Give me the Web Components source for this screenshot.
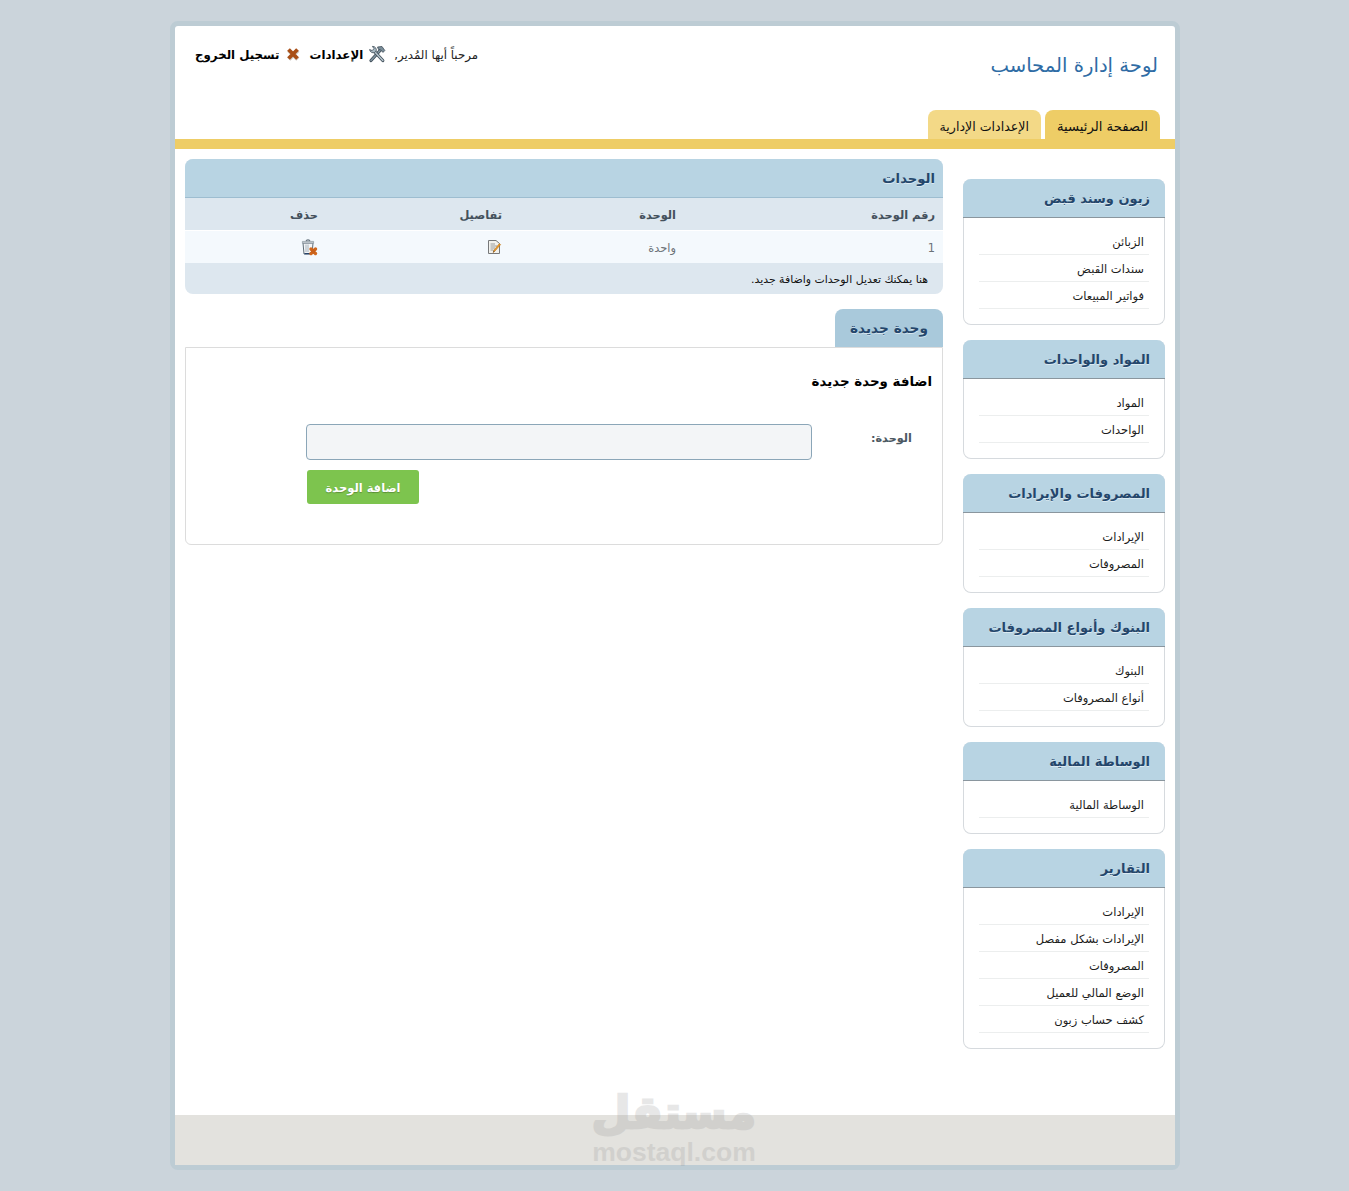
<!DOCTYPE html>
<html lang="ar" dir="rtl">
<head>
<meta charset="utf-8">
<title>لوحة إدارة المحاسب</title>
<style>
  html, body { margin: 0; padding: 0; background: #cbd4db; }
  body { font-family: "DejaVu Sans", "Noto Sans", sans-serif; font-size: 11px; color: #111; }
</style>
</head>
<body>
<app-shell>
  <top-header slot="header">
    <span slot="title">لوحة إدارة المحاسب</span>
    <user-links slot="links"></user-links>
    <nav-tab slot="tabs" active>الصفحة الرئيسية</nav-tab>
    <nav-tab slot="tabs">الإعدادات الإدارية</nav-tab>
  </top-header>

  <side-box slot="side" heading="زبون وسند قبض">
    <side-link>الزبائن</side-link>
    <side-link>سندات القبض</side-link>
    <side-link>فواتير المبيعات</side-link>
  </side-box>
  <side-box slot="side" heading="المواد والواحدات">
    <side-link>المواد</side-link>
    <side-link>الواحدات</side-link>
  </side-box>
  <side-box slot="side" heading="المصروفات والإيرادات">
    <side-link>الإيرادات</side-link>
    <side-link>المصروفات</side-link>
  </side-box>
  <side-box slot="side" heading="البنوك وأنواع المصروفات">
    <side-link>البنوك</side-link>
    <side-link>أنواع المصروفات</side-link>
  </side-box>
  <side-box slot="side" heading="الوساطة المالية">
    <side-link>الوساطة المالية</side-link>
  </side-box>
  <side-box slot="side" heading="التقارير">
    <side-link>الإيرادات</side-link>
    <side-link>الإيرادات بشكل مفصل</side-link>
    <side-link>المصروفات</side-link>
    <side-link>الوضع المالي للعميل</side-link>
    <side-link>كشف حساب زبون</side-link>
  </side-box>

  <units-table slot="main"></units-table>
  <new-unit slot="main"></new-unit>
</app-shell>

<script>
'use strict';

// little hand drawn icons
const ICONS = {
  tools: `<svg width="18" height="18" viewBox="0 0 18 18">
    <path d="M3 15.5 L12.5 5" stroke="#3f4d58" stroke-width="3.2" stroke-linecap="round"/>
    <path d="M3 15.5 L12.5 5" stroke="#7f929e" stroke-width="1.6" stroke-linecap="round"/>
    <path d="M9.5 2 L14 1.5 L16.8 5.5 L15 7.4 L12.5 4.8 L10.5 4.5 Z" fill="#7b8e9a" stroke="#3f4d58" stroke-width=".8"/>
    <path d="M14.8 15.5 L6.5 6.5" stroke="#3f4d58" stroke-width="3.2" stroke-linecap="round"/>
    <path d="M14.8 15.5 L6.5 6.5" stroke="#b4c2cb" stroke-width="1.6" stroke-linecap="round"/>
    <path d="M1.6 4.5 A3.6 3.6 0 0 0 6.8 7.4 L8.2 6 A3.6 3.6 0 0 0 4.4 1.4 L6 3.6 L4.2 5.6 Z" fill="#a8b8c2" stroke="#3f4d58" stroke-width=".8"/>
  </svg>`,
  cross: `<svg width="14" height="14" viewBox="0 0 14 14">
    <path d="M2.5 2.5 L11.5 11.5 M11.5 2.5 L2.5 11.5" stroke="#cfcbc6" stroke-width="4.4" transform="translate(.3 .8)"/>
    <path d="M2.5 2.5 L11.5 11.5 M11.5 2.5 L2.5 11.5" stroke="#a94f17" stroke-width="3.8"/>
  </svg>`,
  page: `<svg width="16" height="16" viewBox="0 0 16 16">
    <path d="M2.5 1.5 H10 L13.5 4.5 V14.5 H2.5 Z" fill="#f2f2ee" stroke="#77797a"/>
    <path d="M4.5 5 H9 M4.5 7 H11 M4.5 9 H9 M4.5 11 H7.5" stroke="#9a9c9c"/>
    <path d="M14.6 5.6 L8.8 12.2 L7.2 13.6 L7.8 11.4 L13.2 4.8 Z" fill="#f0a02a" stroke="#b96d12" stroke-width=".6"/>
    <path d="M8.6 12.3 L7.2 13.6 L7.7 11.6 Z" fill="#444"/>
  </svg>`,
  trash: `<svg width="18" height="18" viewBox="0 0 18 18">
    <path d="M3 5 L4 16 H12 L13 5 Z" fill="#f4f6f7" stroke="#5f6d78"/>
    <path d="M4.5 15.6 H11.5" stroke="#26436b" stroke-width="1.4"/>
    <path d="M6 6.5 V14 M8 6.5 V14" stroke="#a5b1ba"/>
    <path d="M6 3 Q8 .8 10 3" fill="none" stroke="#6c7a84" stroke-width="1.2"/>
    <path d="M2.4 3.4 H13.6 V5.2 H2.4 Z" fill="#c7cfd4" stroke="#7c8992" stroke-width=".6"/>
    <path d="M11 11 L15.5 15.5 M15.5 11 L11 15.5" stroke="#d0681e" stroke-width="3.4" stroke-linecap="round"/>
    <circle cx="13.25" cy="13.25" r="2.2" fill="#c9601a"/>
  </svg>`
};

class AppIcon extends HTMLElement {
  constructor() {
    super();
    this.attachShadow({mode: 'open'}).innerHTML = `
      <style>:host { display: inline-flex; line-height: 0; }</style>
      ${ICONS[this.getAttribute('name')] || ''}`;
  }
}
customElements.define('app-icon', AppIcon);

class AppShell extends HTMLElement {
  constructor() {
    super();
    this.attachShadow({mode: 'open'}).innerHTML = `
      <style>
        :host { display: block; width: 1000px; margin: 21px 169px 21px auto;
          border: 5px solid #bdccd4; border-radius: 8px; background: #fff; position: relative; }
        .body { display: flex; gap: 20px; padding: 10px 10px 66px; align-items: flex-start; }
        .side { width: 202px; flex: none; padding-top: 20px; display: flex; flex-direction: column; gap: 15px; }
        .main { flex: 1; min-width: 0; }
        footer { height: 50px; background: #e3e2de; }
        .mark { position: absolute; left: 417px; top: 1061px; width: 164px; height: 78px; color: #8c8c8c; opacity: .2;
          text-align: center; font-family: "Liberation Sans", sans-serif; font-weight: bold; pointer-events: none; direction: ltr; white-space: nowrap; }
        .mark b { display: block; font: bold 45px/52px "DejaVu Sans", sans-serif; height: 50px; direction: rtl; -webkit-text-stroke: 2.5px #8c8c8c; }
        .mark i { display: block; font-style: normal; font-size: 26.5px; line-height: 28px; margin-top: 1px; }
      </style>
      <slot name="header"></slot>
      <div class="body">
        <div class="side"><slot name="side"></slot></div>
        <div class="main"><slot name="main"></slot></div>
      </div>
      <footer></footer>
      <div class="mark"><b>مستقل</b><i>mostaql.com</i></div>`;
  }
}
customElements.define('app-shell', AppShell);

class TopHeader extends HTMLElement {
  constructor() {
    super();
    this.attachShadow({mode: 'open'}).innerHTML = `
      <style>
        :host { display: block; }
        .top { height: 84px; display: flex; justify-content: space-between; padding: 0 17px 0 20px; }
        h1 { margin: 25px 0 0; font-size: 19.6px; line-height: 30px; font-weight: normal; color: #2f6ca5; }
        .links { padding-top: 18px; }
        .tabs { display: flex; gap: 4px; padding: 0 15px; border-bottom: 10px solid #eecd66; }
      </style>
      <div class="top">
        <h1><slot name="title"></slot></h1>
        <div class="links"><slot name="links"></slot></div>
      </div>
      <div class="tabs"><slot name="tabs"></slot></div>`;
  }
}
customElements.define('top-header', TopHeader);

class UserLinks extends HTMLElement {
  constructor() {
    super();
    this.attachShadow({mode: 'open'}).innerHTML = `
      <style>
        :host { display: flex; align-items: center; height: 20px; font-size: 11.8px; color: #222; white-space: nowrap; }
        span, b { padding-top: 2px; }
        b { color: #000; font-size: 11.8px; }
        app-icon[name=tools] { margin: 0 8px 0 5px; }
        app-icon[name=cross] { margin: 0 10px 0 6px; }
      </style>
      <span>مرحباً أيها المُدير,</span>
      <app-icon name="tools"></app-icon>
      <b>الإعدادات</b>
      <app-icon name="cross"></app-icon>
      <b>تسجيل الخروج</b>`;
  }
}
customElements.define('user-links', UserLinks);

class NavTab extends HTMLElement {
  constructor() {
    super();
    this.attachShadow({mode: 'open'}).innerHTML = `
      <style>
        :host { display: block; height: 29px; line-height: 34px; padding: 0 12px; font-size: 12.6px; color: #111;
          background: #f3d987; border-radius: 8px 8px 0 0; white-space: nowrap; }
        :host([active]) { background: #eecd66; font-size: 13.2px; }
      </style>
      <slot></slot>`;
  }
}
customElements.define('nav-tab', NavTab);

class SideBox extends HTMLElement {
  constructor() {
    super();
    this.attachShadow({mode: 'open'}).innerHTML = `
      <style>
        :host { display: block; background: #fff; border: 1px solid #d6dade; border-top: 0; border-radius: 8px; }
        h3 { margin: 0 -1px; height: 38px; line-height: 40px; padding: 0 15px; font-size: 13px; font-weight: bold; white-space: nowrap;
          color: #24466b; background: #b8d4e3; border-bottom: 1px solid #8a969e; border-radius: 8px 8px 0 0;
          text-shadow: 0 1px 0 rgba(255,255,255,.5); }
        .list { padding: 10px 15px 15px; }
      </style>
      <h3>${this.getAttribute('heading')}</h3>
      <div class="list"><slot></slot></div>`;
  }
}
customElements.define('side-box', SideBox);

class SideLink extends HTMLElement {
  constructor() {
    super();
    this.attachShadow({mode: 'open'}).innerHTML = `
      <style>
        :host { display: block; height: 26px; line-height: 29px; padding: 0 5px; font-size: 11.5px; color: #1c1c1c;
          border-bottom: 1px solid #eceeee; }
      </style>
      <slot></slot>`;
  }
}
customElements.define('side-link', SideLink);

class UnitsTable extends HTMLElement {
  constructor() {
    super();
    this.attachShadow({mode: 'open'}).innerHTML = `
      <style>
        :host { display: block; border-radius: 8px; overflow: hidden; background: #dde7ef; }
        h2 { margin: 0; height: 38px; line-height: 40px; padding: 0 8px; font-size: 13.2px; font-weight: bold;
          color: #24466b; background: #b8d4e3; border-bottom: 1px solid #9dbdd0;
          text-shadow: 0 1px 0 rgba(255,255,255,.5); }
        .row { display: grid; grid-template-columns: 259px 174px 184px 141px; }
        .row > * { padding-right: 8px; }
        .headings { height: 32px; line-height: 34px; font-size: 11.4px; font-weight: bold; color: #44515c;
          border-bottom: 1px solid #fff; }
        .cells { height: 32px; line-height: 34px; background: #f4f9fd; color: #6b7278; font-size: 11.4px; }
        .cells app-icon { margin-top: 7px; }
        .cells app-icon[name=page] { margin-top: 8px; }
        .note { height: 31px; line-height: 33px; padding: 0 15px; font-size: 10.9px; color: #111; }
      </style>
      <h2>الوحدات</h2>
      <div class="row headings"><span>رقم الوحدة</span><span>الوحدة</span><span>تفاصيل</span><span>حذف</span></div>
      <div class="row cells">
        <span>1</span><span>واحدة</span>
        <span><app-icon name="page"></app-icon></span>
        <span><app-icon name="trash"></app-icon></span>
      </div>
      <div class="note">هنا يمكنك تعديل الوحدات واضافة جديد.</div>`;
  }
}
customElements.define('units-table', UnitsTable);

class NewUnit extends HTMLElement {
  constructor() {
    super();
    this.attachShadow({mode: 'open'}).innerHTML = `
      <style>
        :host { display: block; margin-top: 15px; }
        .tab { width: 108px; height: 38px; box-sizing: border-box; line-height: 39px; padding: 0 15px; font-size: 13.7px; font-weight: bold; white-space: nowrap;
          color: #24466b; background: #a9c9db; border-radius: 8px 8px 0 0; text-shadow: 0 1px 0 rgba(255,255,255,.5); }
        .box { height: 198px; box-sizing: border-box; border: 1px solid #dcdcdc; border-radius: 0 0 6px 6px; padding: 22px 10px 0 10px; }
        h4 { margin: 0; height: 54px; line-height: 24px; font-size: 13.4px; font-weight: bold; color: #000; }
        .line { display: flex; height: 36px; }
        label { width: 100px; line-height: 29px; font-size: 11.3px; font-weight: bold; color: #4c5862; flex: none; box-sizing: border-box; padding-right: 20px; }
        input { width: 506px; height: 36px; flex: none; box-sizing: border-box; margin: 0 20px 0 0; background: #f3f5f7; border: 1px solid #8ba6b8; border-radius: 4px; }
        button { display: block; margin: 10px 513px 0 0; padding: 2px 0 0; width: 112px; height: 34px; border: 0; border-radius: 3px; background: #7dc44e;
          font: bold 11.5px "DejaVu Sans", sans-serif; color: #fff; text-shadow: 0 1px 1px rgba(0,0,0,.25); }
      </style>
      <div class="tab">وحدة جديدة</div>
      <div class="box">
        <h4>اضافة وحدة جديدة</h4>
        <div class="line"><label>الوحدة:</label><input type="text"></div>
        <button>اضافة الوحدة</button>
      </div>`;
  }
}
customElements.define('new-unit', NewUnit);
</script>
</body>
</html>
